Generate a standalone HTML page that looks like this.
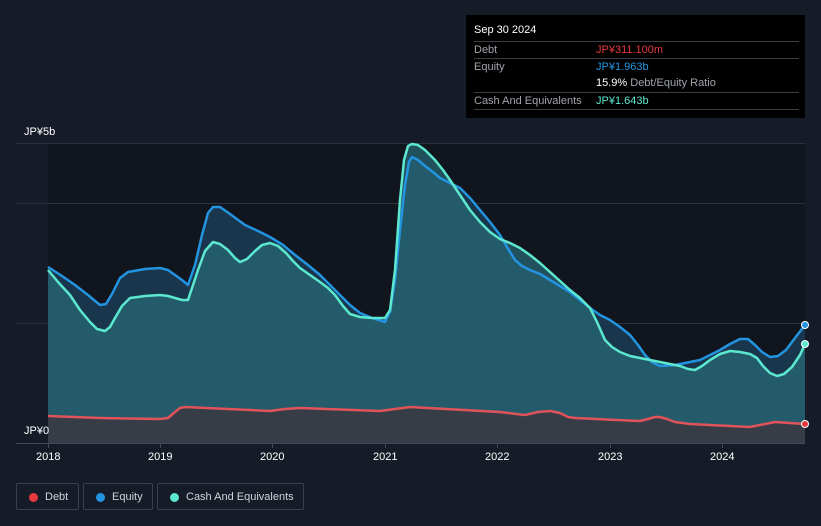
<!DOCTYPE html>
<html><head><meta charset="utf-8"><style>
body{margin:0;width:821px;height:526px;background:#161c27;font-family:"Liberation Sans","Noto Sans CJK JP",sans-serif;overflow:hidden;position:relative}
.t{position:absolute;font-size:11px;color:#fff}
.tip{position:absolute;left:466px;top:15px;width:339px;height:103px;background:#000;}
.tip .r{position:absolute;left:8px;right:6px;border-top:1px solid #3a3d44;font-size:11px;color:#a0a4ab;height:17px;line-height:17px}
.lg{position:absolute;top:483px;height:27px;border:1px solid #3b414c;border-radius:2px;color:#d0d3d8;font-size:11px;line-height:27px;box-sizing:border-box}
.dot{position:absolute;top:9px;width:9px;height:9px;border-radius:50%}
</style></head><body>
<svg width="821" height="526" style="position:absolute;left:0;top:0">
<defs>
<polyline id="eq" points="48,267 62,276 75,285 88,295 100,305 106,304 112,294 120,278 128,272 145,269 160,268 168,270 175,275 182,280 188,285 195,265 202,235 208,213 213,207 220,207 230,214 245,225 258,231 270,237 283,245 295,255 308,265 320,275 330,285 340,295 350,305 360,313 372,318 385,322 390,312 395,280 400,230 405,185 409,162 412,157 418,160 425,166 433,172 440,178 450,183 460,188 470,198 480,210 490,222 500,235 507,247 515,260 522,266 530,270 540,274 550,280 560,286 570,292 580,300 590,308 600,315 610,320 620,327 630,335 638,345 645,355 652,362 660,366 675,365 690,362 700,360 710,355 720,350 730,344 740,339 748,339 755,345 762,352 770,357 778,356 786,350 795,338 805,325"/>
<polyline id="ca" points="48,270 58,282 70,295 80,310 90,322 97,329 105,331 110,327 115,318 122,306 130,298 145,296 160,295 168,296 175,298 182,300 188,300 193,285 198,270 205,251 213,242 220,244 228,250 235,258 240,262 247,259 255,251 262,245 270,243 278,246 286,253 293,261 300,268 310,275 320,282 328,288 335,295 343,306 350,314 360,317 372,318 385,318 390,310 395,270 400,200 404,160 408,146 412,144 418,145 425,150 435,160 443,170 450,180 460,195 470,210 480,222 490,232 500,239 510,243 520,248 530,255 540,263 550,272 560,281 570,290 580,298 590,308 597,322 605,340 612,347 620,352 630,356 640,358 650,360 660,362 670,364 680,366 688,369 695,370 702,366 710,360 720,354 730,351 740,352 750,354 757,358 763,366 770,373 777,376 784,374 792,367 800,355 805,344"/>
<polyline id="de" points="48,416 100,418 160,419 168,418 175,412 180,408 185,407 270,411 285,409 300,408 380,411 395,409 410,407 500,412 525,415 538,412 550,411 560,413 568,417 575,418 640,421 648,419 655,417 660,417 667,419 675,422 690,424 750,427 760,425 775,422 805,424"/>
</defs>
<rect x="48" y="143" width="757" height="300" fill="#10151e"/>
<g stroke="#2c323c" stroke-width="1"><line x1="16" y1="143.5" x2="805" y2="143.5"/><line x1="16" y1="203.5" x2="805" y2="203.5"/><line x1="16" y1="323.5" x2="805" y2="323.5"/><line x1="16" y1="443.5" x2="805" y2="443.5" stroke="#444a55"/></g>
<polygon points="48,443 48,267 62,276 75,285 88,295 100,305 106,304 112,294 120,278 128,272 145,269 160,268 168,270 175,275 182,280 188,285 195,265 202,235 208,213 213,207 220,207 230,214 245,225 258,231 270,237 283,245 295,255 308,265 320,275 330,285 340,295 350,305 360,313 372,318 385,322 390,312 395,280 400,230 405,185 409,162 412,157 418,160 425,166 433,172 440,178 450,183 460,188 470,198 480,210 490,222 500,235 507,247 515,260 522,266 530,270 540,274 550,280 560,286 570,292 580,300 590,308 600,315 610,320 620,327 630,335 638,345 645,355 652,362 660,366 675,365 690,362 700,360 710,355 720,350 730,344 740,339 748,339 755,345 762,352 770,357 778,356 786,350 795,338 805,325 805,443" fill="#1b3a52" opacity="0.9"/>
<polygon points="48,443 48,270 58,282 70,295 80,310 90,322 97,329 105,331 110,327 115,318 122,306 130,298 145,296 160,295 168,296 175,298 182,300 188,300 193,285 198,270 205,251 213,242 220,244 228,250 235,258 240,262 247,259 255,251 262,245 270,243 278,246 286,253 293,261 300,268 310,275 320,282 328,288 335,295 343,306 350,314 360,317 372,318 385,318 390,310 395,270 400,200 404,160 408,146 412,144 418,145 425,150 435,160 443,170 450,180 460,195 470,210 480,222 490,232 500,239 510,243 520,248 530,255 540,263 550,272 560,281 570,290 580,298 590,308 597,322 605,340 612,347 620,352 630,356 640,358 650,360 660,362 670,364 680,366 688,369 695,370 702,366 710,360 720,354 730,351 740,352 750,354 757,358 763,366 770,373 777,376 784,374 792,367 800,355 805,344 805,443" fill="#2a6b78" opacity="0.7"/>
<polygon points="48,443 48,416 100,418 160,419 168,418 175,412 180,408 185,407 270,411 285,409 300,408 380,411 395,409 410,407 500,412 525,415 538,412 550,411 560,413 568,417 575,418 640,421 648,419 655,417 660,417 667,419 675,422 690,424 750,427 760,425 775,422 805,424 805,443" fill="#3a3a44" opacity="0.9"/>
<g fill="none" stroke-width="2.5" stroke-linejoin="round">
<use href="#eq" stroke="#2394e0"/>
<use href="#ca" stroke="#5ce8cf"/>
<use href="#de" stroke="#e0535a"/>
</g>
<circle cx="805" cy="325" r="3.5" fill="#2394e0" stroke="#fff" stroke-width="1"/>
<circle cx="805" cy="344" r="3.5" fill="#5ce8cf" stroke="#fff" stroke-width="1"/>
<circle cx="805" cy="424" r="3.5" fill="#e8383f" stroke="#fff" stroke-width="1"/>
<g stroke="#444a55"><line x1="48.5" y1="443" x2="48.5" y2="448"/><line x1="160.5" y1="443" x2="160.5" y2="448"/><line x1="272.5" y1="443" x2="272.5" y2="448"/><line x1="385.5" y1="443" x2="385.5" y2="448"/><line x1="497.5" y1="443" x2="497.5" y2="448"/><line x1="610.5" y1="443" x2="610.5" y2="448"/><line x1="722.5" y1="443" x2="722.5" y2="448"/></g>
</svg>
<div class="t" style="left:24px;top:126px">JP¥5b</div>
<div class="t" style="left:24px;top:425px">JP¥0</div>
<div class="t" style="left:36px;top:451px">2018</div>
<div class="t" style="left:148px;top:451px">2019</div>
<div class="t" style="left:260px;top:451px">2020</div>
<div class="t" style="left:373px;top:451px">2021</div>
<div class="t" style="left:485px;top:451px">2022</div>
<div class="t" style="left:598px;top:451px">2023</div>
<div class="t" style="left:710px;top:451px">2024</div>
<div class="tip">
<div style="position:absolute;left:8px;top:9px;color:#fff;font-size:11px">Sep 30 2024</div>
<div class="r" style="top:26px">Debt<span style="position:absolute;left:122px;color:#e8383f">JP¥311.100m</span></div>
<div class="r" style="top:43px">Equity<span style="position:absolute;left:122px;color:#2394e0">JP¥1.963b</span></div>
<div class="r" style="top:60px;border-top:none"><span style="position:absolute;left:122px;color:#fff">15.9% <span style="color:#a0a4ab">Debt/Equity Ratio</span></span></div>
<div class="r" style="top:77px">Cash And Equivalents<span style="position:absolute;left:122px;color:#5ce8cf">JP¥1.643b</span></div>
<div class="r" style="top:94px;height:0"></div>
</div>
<div class="lg" style="left:16px;width:63px"><span class="dot" style="left:12px;background:#e8383f"></span><span style="position:absolute;left:28px">Debt</span></div>
<div class="lg" style="left:83px;width:70px"><span class="dot" style="left:12px;background:#2394e0"></span><span style="position:absolute;left:28px">Equity</span></div>
<div class="lg" style="left:157px;width:147px"><span class="dot" style="left:12px;background:#5ce8cf"></span><span style="position:absolute;left:28px">Cash And Equivalents</span></div>
</body></html>
